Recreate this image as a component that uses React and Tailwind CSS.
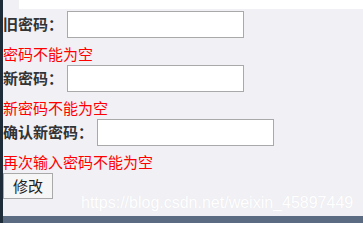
function Field(props) {
  return (
    <div className="flex h-[27px] items-center">
      <label className="shrink-0 font-bold text-[15px] text-[#333]" style={{ width: props.lw }}>
        {props.label}
      </label>
      <input
        type="password"
        className="h-[27px] w-[177px] border border-[#a9a9a9] bg-white outline-none"
      />
    </div>
  );
}

function Error(props) {
  return (
    <div className="flex h-[27px] items-center pt-[5px] text-[15px] text-[#ff0000]">
      {props.children}
    </div>
  );
}

export default function App() {
  return (
    <div
      className="flex h-[223px] w-[363px] overflow-hidden bg-[#f0f0f5]"
      style={{ fontFamily: '"Noto Sans CJK SC", "Liberation Sans", sans-serif' }}
    >
      <div className="w-[3px] shrink-0 bg-[#1e2b38]" />
      <div className="relative flex flex-1 flex-col">
        <div className="ml-[16px] h-[9px] bg-white" />
        <div className="mt-[2px] flex flex-col">
          <Field label="旧密码：" lw="64px" />
          <Error>密码不能为空</Error>
          <Field label="新密码：" lw="64px" />
          <Error>新密码不能为空</Error>
          <Field label="确认新密码：" lw="94px" />
          <Error>再次输入密码不能为空</Error>
          <div>
            <button className="h-[26px] w-[50px] border border-[#a9a9a9] bg-[#f6f6f6] text-[15px] text-[#222]">
              修改
            </button>
          </div>
        </div>
        <div className="mt-auto h-[7px] bg-[#5b6b82]" />
        <div
          className="absolute left-[78px] top-[195px] whitespace-nowrap text-[16px] leading-[16px] text-white"
          style={{ fontFamily: '"Liberation Sans", sans-serif', textShadow: "0 0 1px rgba(0,0,0,0.05)" }}
        >
          https://blog.csdn.net/weixin_45897449
        </div>
      </div>
    </div>
  );
}
